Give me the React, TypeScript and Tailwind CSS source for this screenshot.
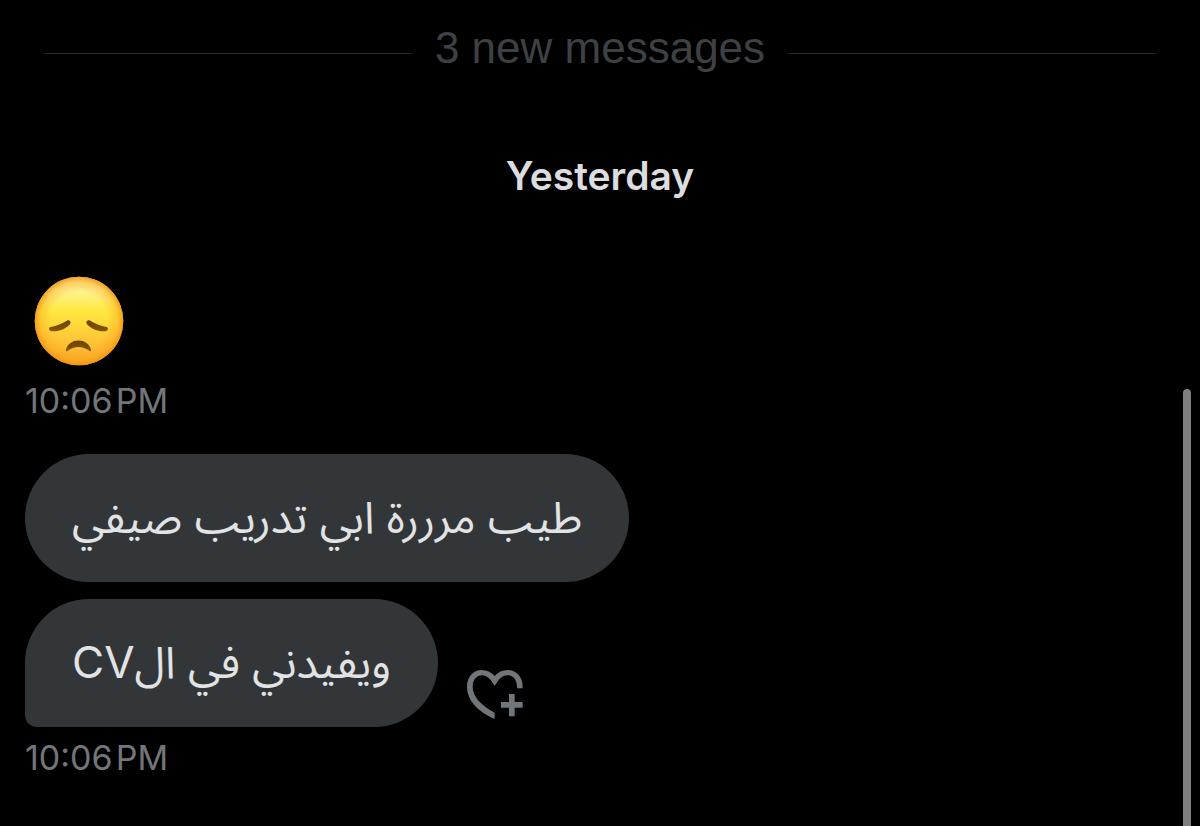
import type { ReactNode } from "react";

function DisappointedFace() {
  return (
    <svg viewBox="0 0 90 90" role="img" aria-label="Disappointed face" className="size-[90px]">
      <defs>
        <linearGradient id="skin" x1="0" y1="0" x2="0" y2="1">
          <stop offset="0" stopColor="#fdeb8e" />
          <stop offset="0.16" stopColor="#fdf291" />
          <stop offset="0.38" stopColor="#ffe93f" />
          <stop offset="0.62" stopColor="#ffd03a" />
          <stop offset="0.82" stopColor="#fdbb33" />
          <stop offset="1" stopColor="#f8a626" />
        </linearGradient>
        <radialGradient id="rim" cx="0.5" cy="0.5" r="0.5">
          <stop offset="0.65" stopColor="#f9a01b" stopOpacity="0" />
          <stop offset="0.88" stopColor="#f9a01b" stopOpacity="0.4" />
          <stop offset="1" stopColor="#f2900f" stopOpacity="0.85" />
        </radialGradient>
        <linearGradient id="feature" x1="0" y1="0" x2="0" y2="1">
          <stop offset="0" stopColor="#6b4204" />
          <stop offset="1" stopColor="#855609" />
        </linearGradient>
      </defs>
      <circle cx="45" cy="45" r="44.3" fill="url(#skin)" />
      <circle cx="45" cy="45" r="44.3" fill="url(#rim)" />
      <g fill="url(#feature)">
        <path d="M16.600 51C22.500 50 28.500 47.800 32.800 44.800C35.500 43.200 37.800 46.300 35.800 48.600C31.400 53.400 24 56 17.300 55.200C14.500 54.600 14.500 51.400 16.600 51Z" />
        <path d="M72.400 51C66.500 50 60.500 47.800 56.200 44.800C53.500 43.200 51.200 46.300 53.200 48.600C57.600 53.400 65 56 71.700 55.200C74.500 54.600 74.500 51.400 72.400 51Z" />
        <path d="M32 73.500C33.600 67.800 38.200 64.400 44.500 64.400C50.800 64.400 55.400 67.800 57 73.500C57.500 75.200 56.200 75.600 55 74.600C48.500 69.800 40.500 69.800 34 74.600C32.800 75.600 31.500 75.200 32 73.500Z" />
      </g>
    </svg>
  );
}

function HeartPlusIcon() {
  return (
    <svg viewBox="0 0 174 153" aria-hidden="true" className="h-[51px] w-[58px] fill-[#71767b]">
      <path d="M86 150V131C43 108 20 81 20 53C20 32 32 19 48 19C61 19 71 28 78 39L86 50L94 39C101 28 111 19 124 19C141 19 153 32 153 54V58H170V53C170 22 150 3 125 3C109 3 96 9 86 21C76 9 63 3 47 3C21 3 3 24 3 53C3 92 34 127 86 150Z" />
      <path d="M129 75H146V99H170V116H146V142H129V116H105V99H129Z" />
    </svg>
  );
}

function Timestamp() {
  return (
    <time dateTime="22:06" className="block text-[34px] leading-10 text-[#71767b]">
      10:06{"\u200a"}PM
    </time>
  );
}

function Bubble({ tail = false, children }: { tail?: boolean; children: ReactNode }) {
  return (
    <p
      dir="rtl"
      className={`rounded-[64px] bg-[#333639] px-[47px] pt-[31px] pb-[33px] text-[44px] leading-16 whitespace-nowrap text-[#e1e3e4] ${
        tail ? "rounded-bl-[12px]" : ""
      }`}
    >
      {children}
    </p>
  );
}

export default function App() {
  return (
    <main className="relative min-h-screen overflow-hidden bg-black px-[25px] pt-5 pb-12 font-['Inter','Noto_Sans_Arabic','DejaVu_Sans',sans-serif]">
      <div className="flex items-center gap-6 px-5">
        <span className="mt-2.5 h-px flex-1 bg-[#2a2c2f]" />
        <h2 className="font-['Liberation_Sans',sans-serif] text-[44px] leading-14 text-[#3e4144]">3 new messages</h2>
        <span className="mt-2.5 h-px flex-1 bg-[#2a2c2f]" />
      </div>

      <h3 className="mt-[76px] text-center text-[39px] leading-12 font-semibold text-[#dcdddf]">Yesterday</h3>

      <ol>
        <li className="mt-[76px]">
          <div className="px-[9px]">
            <DisappointedFace />
          </div>
          <div className="mt-[15px]">
            <Timestamp />
          </div>
        </li>
        <li className="mt-[33px] flex">
          <Bubble>طيب مرررة ابي تدريب صيفي</Bubble>
        </li>
        <li className="mt-[17px]">
          <div className="flex items-end gap-7">
            <Bubble tail>ويفيدني في الCV</Bubble>
            <button type="button" aria-label="Add reaction" className="mb-[7px]">
              <HeartPlusIcon />
            </button>
          </div>
          <div className="mt-[11px]">
            <Timestamp />
          </div>
        </li>
      </ol>

      <div aria-hidden="true" className="absolute top-[389px] right-[9px] bottom-0 w-2 rounded-t-full bg-[#7f7f7f]" />
    </main>
  );
}
